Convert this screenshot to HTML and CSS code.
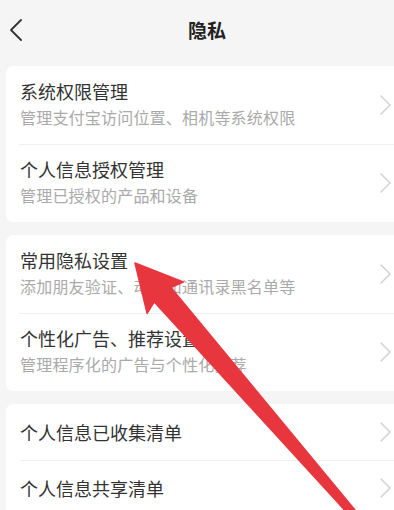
FILE: index.html
```html
<!DOCTYPE html>
<html lang="zh-CN">
<head>
    <meta charset="UTF-8">
    <meta name="viewport" content="width=device-width, initial-scale=1.0">
    <title>隐私</title>
    <link rel="stylesheet" href="styles.css">
</head>
<body>
    <div class="page">
        <div class="nav-bar">
            <svg class="back-icon" width="14" height="22" viewBox="0 0 14 22">
                <polyline points="12,1 2,11 12,21" fill="none" stroke="#333" stroke-width="1.8" stroke-linejoin="round" stroke-linecap="round"/>
            </svg>
            <div class="nav-title">隐私</div>
        </div>

        <div class="card">
            <div class="row">
                <div class="row-text">
                    <div class="row-title">系统权限管理</div>
                    <div class="row-desc">管理支付宝访问位置、相机等系统权限</div>
                </div>
                <svg class="chevron" width="12" height="20" viewBox="0 0 12 20"><polyline points="1,1 10,10 1,19"/></svg>
            </div>
            <div class="row">
                <div class="row-text">
                    <div class="row-title">个人信息授权管理</div>
                    <div class="row-desc">管理已授权的产品和设备</div>
                </div>
                <svg class="chevron" width="12" height="20" viewBox="0 0 12 20"><polyline points="1,1 10,10 1,19"/></svg>
            </div>
        </div>

        <div class="card">
            <div class="row">
                <div class="row-text">
                    <div class="row-title">常用隐私设置</div>
                    <div class="row-desc">添加朋友验证、动态和通讯录黑名单等</div>
                </div>
                <svg class="chevron" width="12" height="20" viewBox="0 0 12 20"><polyline points="1,1 10,10 1,19"/></svg>
            </div>
            <div class="row">
                <div class="row-text">
                    <div class="row-title">个性化广告、推荐设置</div>
                    <div class="row-desc">管理程序化的广告与个性化推荐</div>
                </div>
                <svg class="chevron" width="12" height="20" viewBox="0 0 12 20"><polyline points="1,1 10,10 1,19"/></svg>
            </div>
        </div>

        <div class="card">
            <div class="row row-single">
                <div class="row-title">个人信息已收集清单</div>
                <svg class="chevron" width="12" height="20" viewBox="0 0 12 20"><polyline points="1,1 10,10 1,19"/></svg>
            </div>
            <div class="row row-single">
                <div class="row-title">个人信息共享清单</div>
                <svg class="chevron" width="12" height="20" viewBox="0 0 12 20"><polyline points="1,1 10,10 1,19"/></svg>
            </div>
        </div>

        <!-- red pointer drawn over the list -->
        <svg class="pointer" width="394" height="510" viewBox="0 0 394 510">
            <polygon points="135,263 183.3,282 170.9,287.5 363.9,520.8 358.7,525.4 154.3,301.9 147.1,313.4" fill="#e8363f" stroke="#e8363f" stroke-width="1.5" stroke-linejoin="round"/>
        </svg>
    </div>
</body>
</html>
```

FILE: styles.css
```css
body {
    margin: 0;
    background-color: #f5f5f5;
    font-family: "Noto Sans CJK SC", "Noto Sans", sans-serif;
    overflow: hidden;
}

.page {
    position: relative;
    width: 394px;
    height: 510px;
    overflow: hidden;
}

.nav-bar {
    position: relative;
    height: 58px;
    display: flex;
    align-items: center;
    justify-content: center;
    margin-bottom: 8px;
    padding-left: 20px;
}

.back-icon {
    position: absolute;
    left: 9px;
    top: 19px;
}

.nav-title {
    font-size: 19px;
    font-weight: bold;
    color: #222;
    margin-top: 1px;
}

/* cards run on past the right edge of the screen */
.card {
    background-color: #fff;
    border-radius: 7px 0 0 7px;
    margin: 0 0 13px 6px;
    overflow: hidden;
}

.row {
    display: flex;
    align-items: center;
    height: 78px;
    padding: 0 2px 0 14px;
    box-sizing: border-box;
    position: relative;
}

.row + .row::before {
    content: "";
    position: absolute;
    top: 0;
    left: 13px;
    right: 0;
    border-top: 1px solid #efefef;
}

.row-single {
    height: 56px;
}

.row-text {
    flex: 1;
    padding-bottom: 1px;
}

.row-single .row-title {
    flex: 1;
}

.row-title {
    font-size: 18px;
    line-height: 25px;
    color: #333;
}

.row-desc {
    font-size: 16px;
    line-height: 26px;
    letter-spacing: 0.2px;
    color: #aaa;
}

.chevron polyline {
    fill: none;
    stroke: #cfcfcf;
    stroke-width: 1.4;
    stroke-linecap: round;
    stroke-linejoin: round;
}

.pointer {
    position: absolute;
    left: 0;
    top: 0;
}
```
